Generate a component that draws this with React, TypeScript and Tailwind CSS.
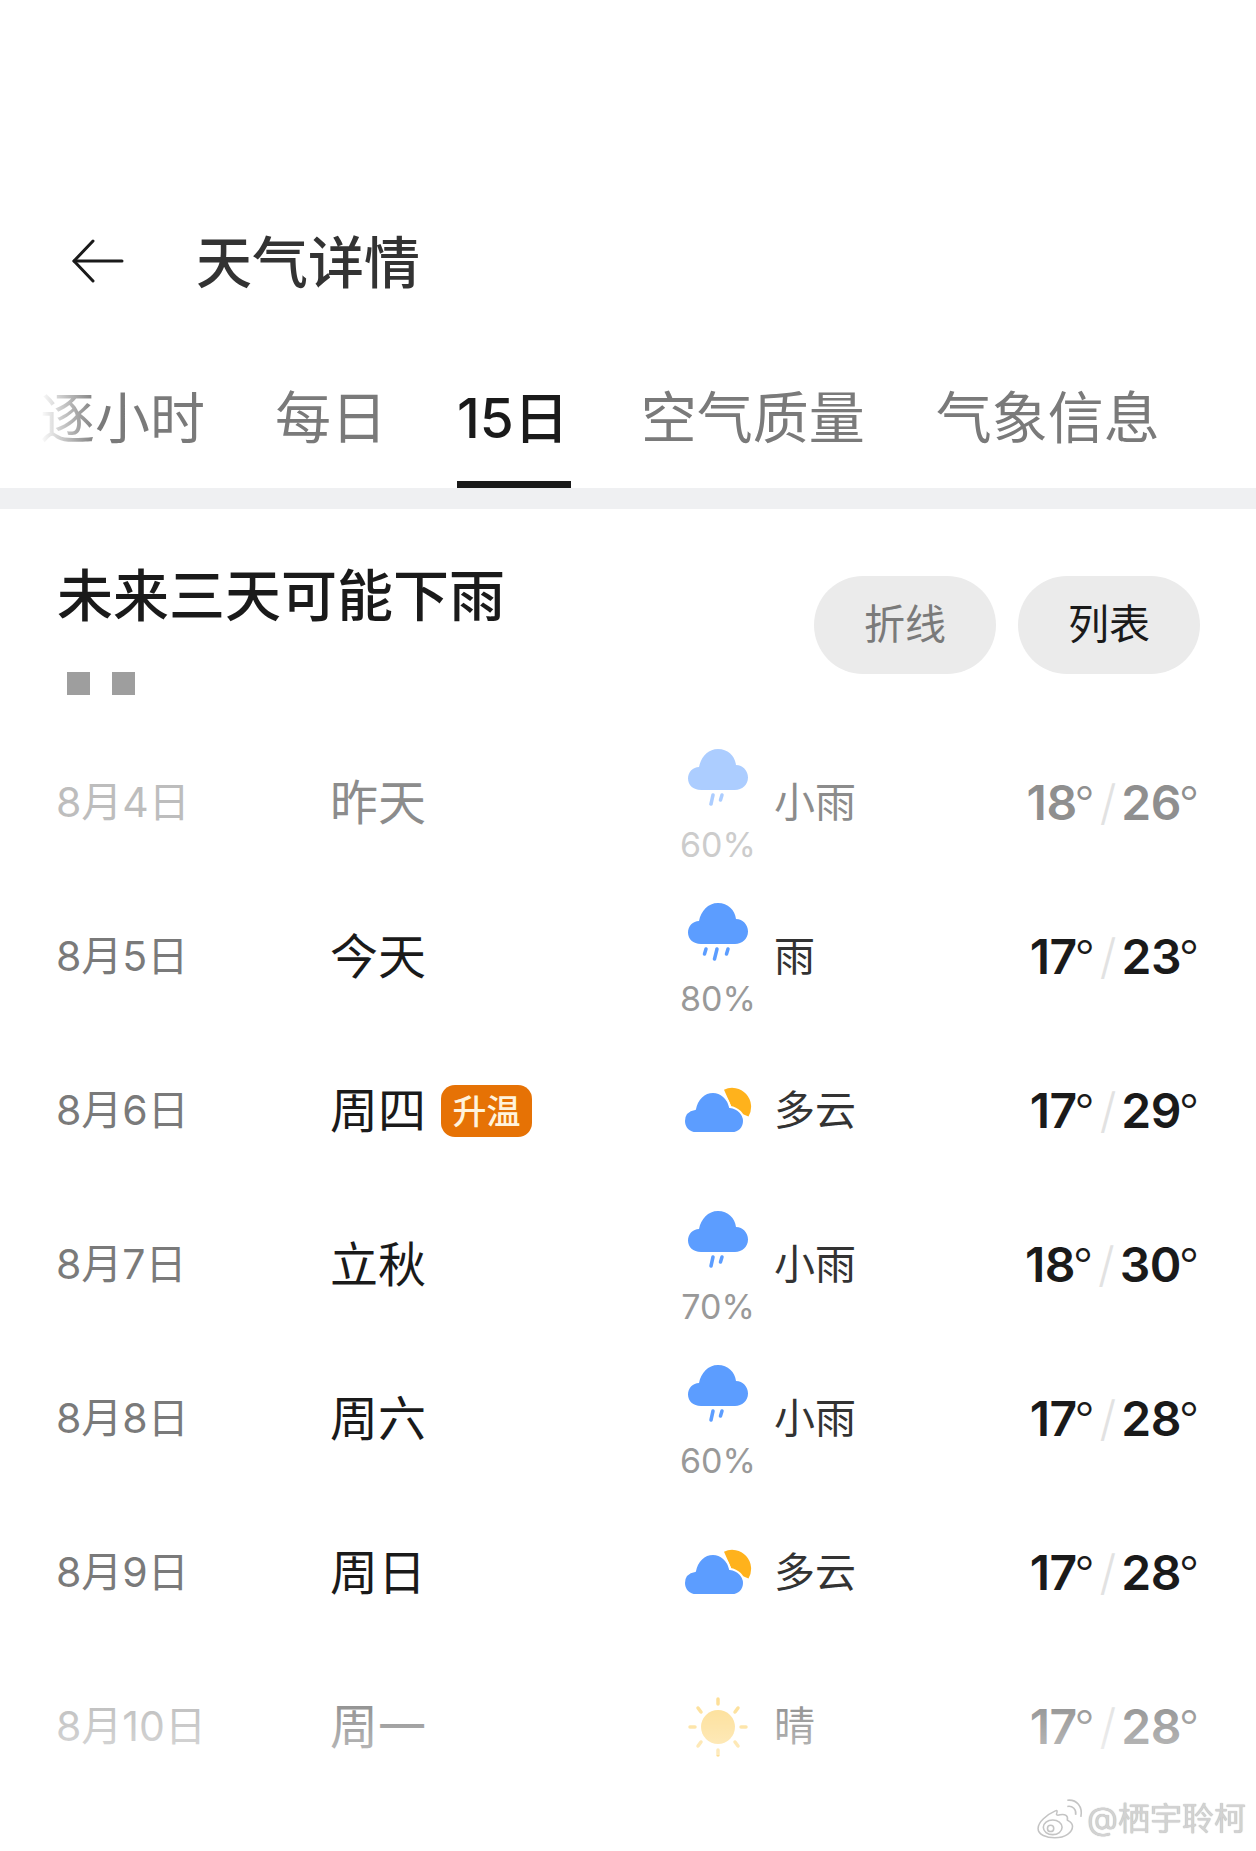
import React from 'react';

const CloudRain = ({ drops, faded }: { drops: number; faded?: boolean }) => (
  <svg width="64" height="60" viewBox="0 0 64 60" className={faded ? 'opacity-50' : ''}>
    <path d="M15 42 C7 42 2 37 2 30.500 C2 24 7 19 13 19 C15 9 22 1 32 1 C42 1 49 8 50 17 C57 17 62 23 62 29.500 C62 37 56 42 49 42 Z" fill="#5c9dff" />
    {drops === 2 ? (
      <g stroke="#5c9dff" strokeWidth="3.500" strokeLinecap="round">
        <line x1="27" y1="47" x2="25" y2="56" />
        <line x1="36" y1="47" x2="34.500" y2="52" />
      </g>
    ) : (
      <g stroke="#5c9dff" strokeWidth="3.500" strokeLinecap="round">
        <line x1="20" y1="47" x2="18.500" y2="52" />
        <line x1="31" y1="47" x2="28.500" y2="57" />
        <line x1="42" y1="47" x2="40.500" y2="52" />
      </g>
    )}
  </svg>
);

const CloudSun = () => (
  <svg width="70" height="50" viewBox="0 0 70 50">
    <path d="M41 3.700 A19 19 0 0 1 65.500 30.500 L50 24 Z" fill="#ffb21c" />
    <path d="M13 47 C6 47 1 42 1 35 C1 28 6 24 12 23 C14 13 21 6 30 6 C38 6 45 12 47 21 C55 22 61 28 61 35 C61 42 56 47 49 47 Z" fill="#5c9dff" stroke="#ffffff" strokeWidth="2" />
  </svg>
);

const Sun = () => (
  <svg width="60" height="60" viewBox="0 0 60 60" className="opacity-60">
    <circle cx="30" cy="30" r="17" fill="#fcc94e" />
    <g stroke="#fcc94e" strokeWidth="3.500" strokeLinecap="round">
      <line x1="30" y1="2" x2="30" y2="7" />
      <line x1="30" y1="53" x2="30" y2="58" />
      <line x1="2" y1="30" x2="7" y2="30" />
      <line x1="53" y1="30" x2="58" y2="30" />
      <line x1="10" y1="11" x2="13" y2="15" />
      <line x1="50" y1="11" x2="47" y2="15" />
      <line x1="10" y1="49" x2="13" y2="45" />
      <line x1="50" y1="49" x2="47" y2="45" />
    </g>
  </svg>
);

const Weibo = () => (
  <svg width="48" height="42" viewBox="0 0 46 40" fill="none" stroke="#c4c4c4" strokeWidth="1.500">
    <path d="M19 12 C10 16 2 23 2 29 C2 35 10 38 18 38 C28 38 35 33 35 27 C35 23 31 22 30 21 C31 17 28 15 23 16 C20 17 19 16 20 14 C20.500 12 20 11.500 19 12 Z" fill="#ffffff" />
    <ellipse cx="16" cy="28" rx="9" ry="7" />
    <circle cx="14" cy="29" r="3" />
    <path d="M30 8 C35 7 39 11 38 16" />
    <path d="M30 2 C39 1 45 8 43 18" />
  </svg>
);

type Day = {
  date: string;
  name: string;
  icon: 'rain2' | 'rain3' | 'cloud' | 'sun';
  pct?: string;
  cond: string;
  low: string;
  high: string;
  badge?: string;
  faded?: boolean;
};

const days: Day[] = [
  { date: '8月4日', name: '昨天', icon: 'rain2', pct: '60%', cond: '小雨', low: '18', high: '26', faded: true },
  { date: '8月5日', name: '今天', icon: 'rain3', pct: '80%', cond: '雨', low: '17', high: '23' },
  { date: '8月6日', name: '周四', icon: 'cloud', cond: '多云', low: '17', high: '29', badge: '升温' },
  { date: '8月7日', name: '立秋', icon: 'rain2', pct: '70%', cond: '小雨', low: '18', high: '30' },
  { date: '8月8日', name: '周六', icon: 'rain2', pct: '60%', cond: '小雨', low: '17', high: '28' },
  { date: '8月9日', name: '周日', icon: 'cloud', cond: '多云', low: '17', high: '28' },
  { date: '8月10日', name: '周一', icon: 'sun', cond: '晴', low: '17', high: '28', faded: true },
];

function Row({ d }: { d: Day }) {
  return (
    <div className="flex h-[154px] items-center">
      <div className={`w-[274px] text-[41px] ${d.faded ? 'text-[#bdbdbd]' : 'text-[#7a7a7a]'}`}>{d.date}</div>
      <div className="flex w-[340px] items-center">
        <span className={`text-[48px] ${d.faded ? 'text-[#8c8c8c]' : 'text-[#1a1a1a]'}`}>{d.name}</span>
        {d.badge && (
          <span className="ml-[15px] flex h-[52px] w-[91px] items-center justify-center rounded-[14px] bg-[#e67205] text-[34px] font-medium text-[#fff3dc]">
            {d.badge}
          </span>
        )}
      </div>
      <div className={`flex w-[96px] flex-col items-center ${d.pct ? 'pt-[5px]' : ''}`}>
        {d.icon === 'rain2' && <CloudRain drops={2} faded={d.faded} />}
        {d.icon === 'rain3' && <CloudRain drops={3} />}
        {d.icon === 'cloud' && <CloudSun />}
        {d.icon === 'sun' && <Sun />}
        {d.pct && (
          <span className={`mt-[18px] text-[34px] leading-[38px] ${d.faded ? 'text-[#cccccc]' : 'text-[#999999]'}`}>{d.pct}</span>
        )}
      </div>
      <div className={`ml-[8px] w-[150px] text-[41px] ${d.faded ? 'text-[#8c8c8c]' : 'text-[#333333]'}`}>{d.cond}</div>
      <div className={`flex flex-1 items-center justify-end text-[48px] font-semibold ${d.faded ? 'text-[#8f8f8f]' : 'text-[#1a1a1a]'}`}>
        <span className="tracking-[-0.5px]">{d.low}</span>
        <span className="-ml-[2px] -mt-[3px] text-[44px] font-light">°</span>
        <span className="mx-[5px] font-light text-[#e2e2e2]">/</span>
        <span className="tracking-[-0.5px]">{d.high}</span>
        <span className="-ml-[2px] -mt-[3px] text-[44px] font-light">°</span>
      </div>
    </div>
  );
}

export default function App() {
  return (
    <div className="relative h-[1851px] w-[1256px] overflow-hidden bg-white font-['Inter','Noto_Sans_CJK_SC',sans-serif]">
      <div className="flex h-[326px] items-center pl-[72px] pt-[200px]">
        <svg width="52" height="44" viewBox="0 0 52 44" fill="none" stroke="#1a1a1a" strokeWidth="3" strokeLinecap="round" strokeLinejoin="round" className="-mt-[4px]">
          <path d="M50 22H2" />
          <path d="M21 2L2 22L21 42" />
        </svg>
        <h1 className="ml-[72px] text-[56px] font-medium text-[#333333]">天气详情</h1>
      </div>
      <div className="flex h-[162px] items-center pt-[22px] text-[56px] text-[#7a7a7a]">
        <span className="ml-[40px] w-[165px] whitespace-nowrap bg-gradient-to-r from-[#ffffff] to-[#7a7a7a] to-[35%] bg-clip-text text-[55px] text-transparent">逐小时</span>
        <span className="ml-[70px]">每日</span>
        <span className="ml-[70px] text-[55px] font-medium text-[#1a1a1a]">15日</span>
        <span className="ml-[72px]">空气质量</span>
        <span className="ml-[71px]">气象信息</span>
      </div>
      <div className="relative h-[21px] bg-[#eff0f2]">
        <div className="absolute -top-[7px] left-[457px] h-[7px] w-[114px] bg-[#1a1a1a]" />
      </div>
      <div className="flex items-start justify-between pl-[57px] pr-[56px] pt-[47px]">
        <div>
          <h2 className="text-[56px] font-medium leading-[80px] text-[#1a1a1a]">未来三天可能下雨</h2>
          <div className="mt-[36px] flex gap-[22px] pl-[10px]">
            <div className="h-[23px] w-[23px] bg-[#9e9e9e]" />
            <div className="h-[23px] w-[23px] bg-[#9e9e9e]" />
          </div>
        </div>
        <div className="flex gap-[22px] pt-[20px]">
          <div className="flex h-[98px] w-[182px] items-center justify-center rounded-[49px] bg-[#ebebeb] text-[41px] text-[#7a7a7a]">折线</div>
          <div className="flex h-[98px] w-[182px] items-center justify-center rounded-[49px] bg-[#ebebeb] text-[41px] text-[#1a1a1a]">列表</div>
        </div>
      </div>
      <div className="mt-[31px] pl-[56px] pr-[57px]">
        {days.map((d) => (
          <Row key={d.date} d={d} />
        ))}
      </div>
      {/* bottom fade + watermark */}
      <div className="absolute left-0 right-0 top-[1695px] h-[60px] bg-gradient-to-b from-transparent to-white/40" />
      <div className="absolute bottom-[8px] right-[10px] flex items-center gap-[3px] text-[32px] text-[#d2d2d2] [text-shadow:0_0_1px_#a8a8a8]">
        <Weibo />
        <span>@栖宇聆柯</span>
      </div>
    </div>
  );
}
